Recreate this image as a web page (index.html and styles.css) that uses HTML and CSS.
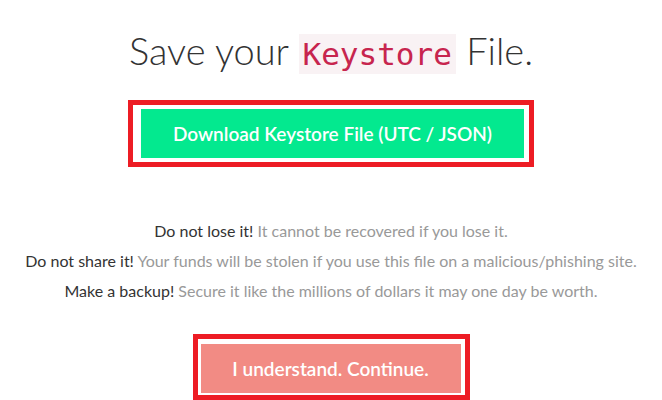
FILE: index.html
```html
<html>
<head>
  <link rel="stylesheet" href="styles.css">
</head>
<body>
  <div class="page">
    <h1 class="title">Save your <code>Keystore</code> File.</h1>

    <div class="highlight highlight-download">
      <button class="btn btn-download">Download Keystore File (UTC / JSON)</button>
    </div>

    <div class="warnings">
      <p><strong>Do not lose it!</strong> It cannot be recovered if you lose it.</p>
      <p><strong>Do not share it!</strong> Your funds will be stolen if you use this file on a malicious/phishing site.</p>
      <p><strong>Make a backup!</strong> Secure it like the millions of dollars it may one day be worth.</p>
    </div>

    <div class="highlight highlight-continue">
      <button class="btn btn-continue">I understand. Continue.</button>
    </div>
  </div>
</body>
</html>
```

FILE: styles.css
```css
body {
  margin: 0;
  font-family: Lato, "Open Sans", sans-serif;
  background-color: #ffffff;
  color: #333333;
}

.page {
  display: flex;
  flex-direction: column;
  align-items: center;
  padding-top: 26px;
}

.title {
  margin: 0;
  font-size: 38px;
  font-weight: 300;
  line-height: 48px;
  color: #333333;
}

.title code {
  font-family: "DejaVu Sans Mono", "Liberation Mono", monospace;
  font-size: 31px;
  line-height: 1;
  padding: 2px 4px;
  color: #c7254e;
  background-color: #f9f2f4;
}

.highlight {
  border: 5px solid #ed1c24;
}

.highlight-download {
  margin-top: 26px;
  padding: 4px 5px 4px 8px;
}

.highlight-continue {
  margin-top: 28px;
  padding: 5px 4px 2px 3px;
}

.btn {
  display: block;
  height: 49px;
  padding: 0;
  border: none;
  color: #ffffff;
  font-family: Lato, "Open Sans", sans-serif;
  font-weight: 600;
  cursor: pointer;
}

.btn-download {
  width: 383px;
  font-size: 19px;
  background-color: #03e98f;
}

.btn-continue {
  width: 260px;
  font-size: 19px;
  background-color: #f28b84;
}

.warnings {
  margin-top: 49px;
  text-align: center;
  font-size: 16px;
}

.warnings p {
  margin: 0;
  line-height: 30px;
  color: #999999;
}

.warnings strong {
  font-weight: 400;
  color: #333333;
}
```
